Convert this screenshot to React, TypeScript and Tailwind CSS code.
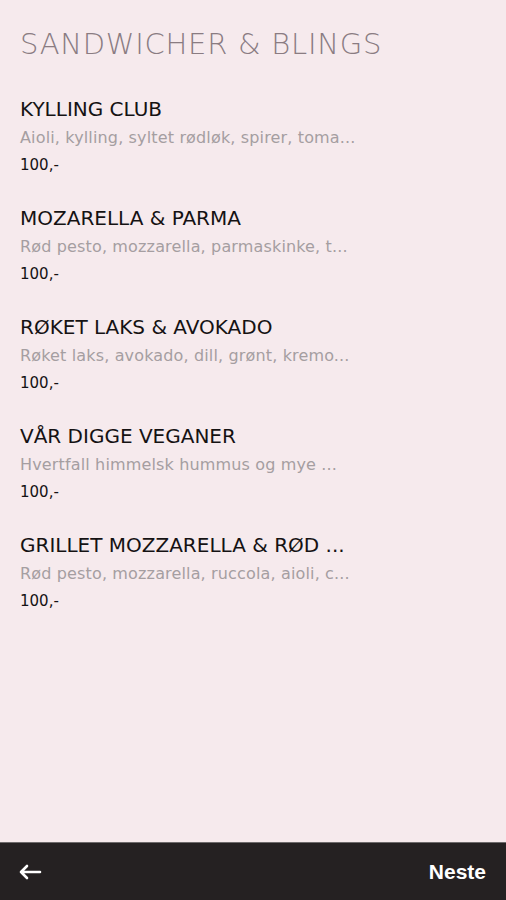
const items = [
  { name: "KYLLING CLUB", desc: "Aioli, kylling, syltet rødløk, spirer, toma...", price: "100,-" },
  { name: "MOZARELLA & PARMA", desc: "Rød pesto, mozzarella, parmaskinke, t...", price: "100,-" },
  { name: "RØKET LAKS & AVOKADO", desc: "Røket laks, avokado, dill, grønt, kremo...", price: "100,-" },
  { name: "VÅR DIGGE VEGANER", desc: "Hvertfall himmelsk hummus og mye ...", price: "100,-" },
  { name: "GRILLET MOZZARELLA & RØD ...", desc: "Rød pesto, mozzarella, ruccola, aioli, c...", price: "100,-" },
];

export default function App() {
  return (
    <div className="flex h-[900px] w-[506px] flex-col bg-[#f6eaed] font-['DejaVu_Sans',sans-serif]">
      <div className="flex-1 px-5 pt-[26px]">
        <h1 className="text-[29px] font-extralight leading-[36px] tracking-[0.75px] text-[#8a7c82]">
          SANDWICHER &amp; BLINGS
        </h1>
        <div className="mt-[35px] flex flex-col gap-[31px]">
          {items.map((it) => (
            <div key={it.name} className="flex flex-col">
              <div className="text-[20px] leading-6 text-[#151213]">{it.name}</div>
              <div className="mt-[7px] text-[16px] leading-5 tracking-[0.15px] text-[#a59ea1]">{it.desc}</div>
              <div className="mt-[7px] text-[15px] leading-5 text-[#151213]">{it.price}</div>
            </div>
          ))}
        </div>
      </div>
      <div className="flex h-[58px] items-center justify-between border-t border-[#6e6a6b] bg-[#252122] pl-[18px] pr-[20px]">
        <svg width="24" height="18" viewBox="0 0 24 18" fill="none" stroke="white" strokeWidth="2.6" strokeLinecap="round" strokeLinejoin="round">
          <path d="M22 9H3M9 3L3 9l6 6" />
        </svg>
        <span className="font-['Liberation_Sans',sans-serif] text-[21px] font-bold text-white">Neste</span>
      </div>
    </div>
  );
}
